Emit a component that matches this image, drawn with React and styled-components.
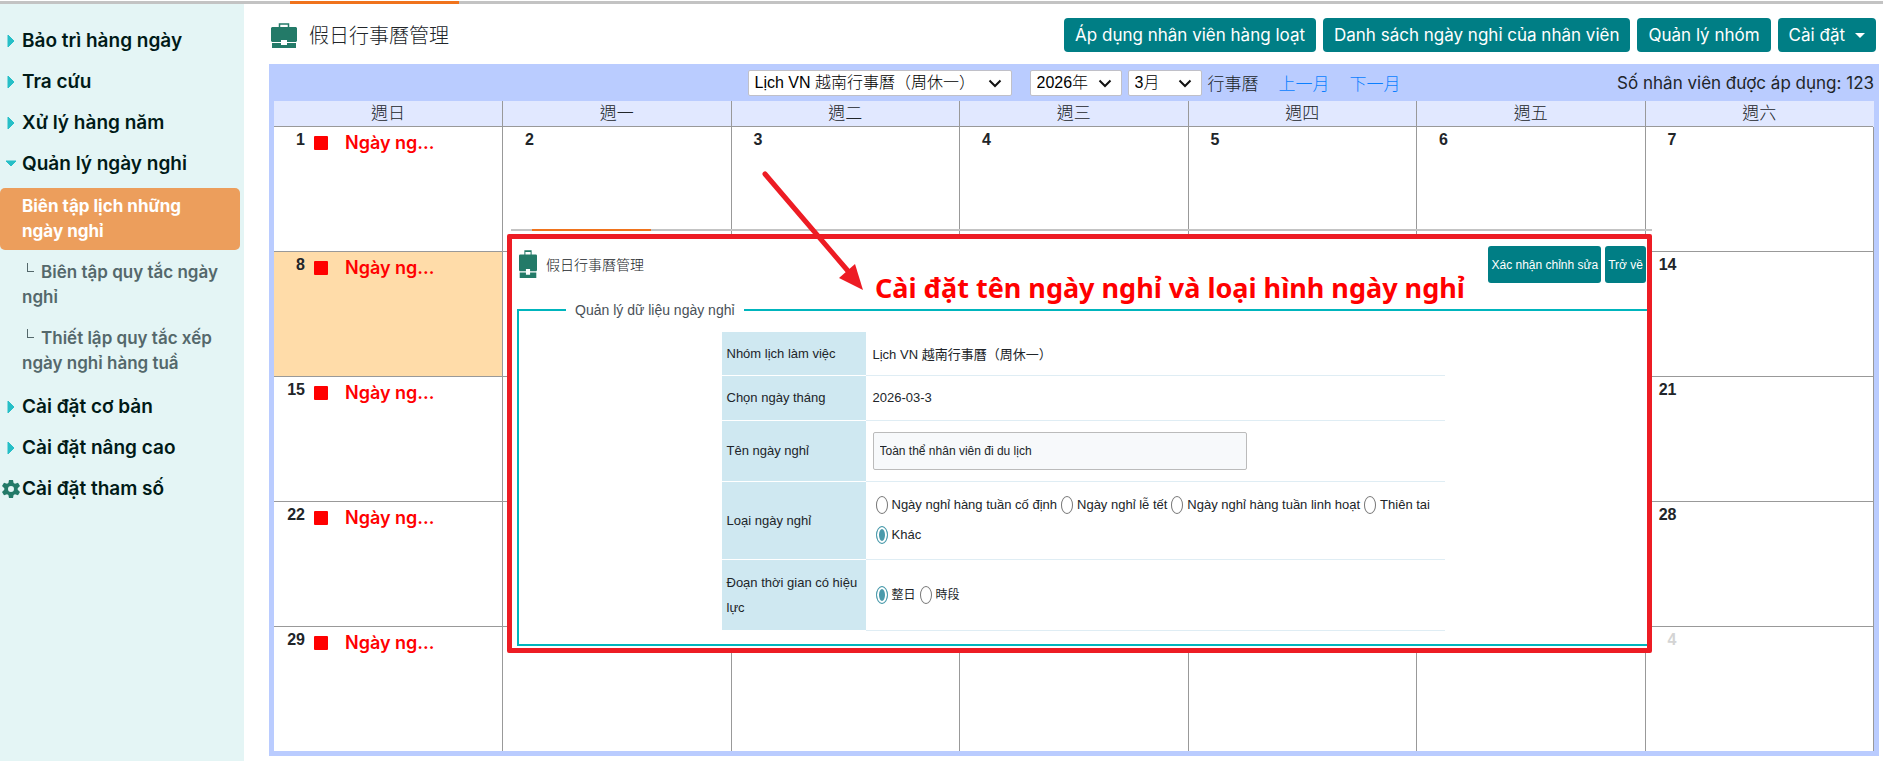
import React from "react";
import styled, { createGlobalStyle, css } from "styled-components";

const GlobalStyle = createGlobalStyle`
  * { box-sizing: border-box; }
  body {
    margin: 0;
    background: #fff;
    color: #212529;
    font-family: Inter, "Noto Sans CJK TC", sans-serif;
    font-size: 16px;
  }
  button, input, select { font: inherit; color: inherit; }
`;

const Page = styled.div`
  display: flex;
  flex-direction: column;
  min-height: 100vh;
  padding-top: 1px;
`;

const Rule = styled.div`
  height: ${(p) => (p.$thin ? 2 : 3)}px;
  padding-left: ${(p) => p.$start}px;
  background: #c3c3c3;
`;

const RuleMark = styled.div`
  width: ${(p) => p.$width}px;
  height: 100%;
  background: #f0731c;
`;

const Columns = styled.div`
  display: flex;
  flex: 1;
`;

const Sidebar = styled.nav`
  flex: 0 0 244px;
  padding: 16px 4px 0 0;
  background: #e4f5f5;
`;

const MenuItem = styled.a`
  display: grid;
  grid-template-columns: 18px 1fr;
  column-gap: 2px;
  align-items: center;
  height: 41px;
  padding-left: 2px;
  color: #001a17;
  font-size: 19px;
  font-weight: 600;
  text-decoration: none;
  svg { justify-self: center; }
`;

const SubItem = styled.a`
  display: block;
  padding: 6px 16px 6px 22px;
  margin-bottom: 4px;
  color: #54686b;
  font-size: 17px;
  font-weight: 600;
  line-height: 25px;
  text-decoration: none;
  ${(p) =>
    p.$active &&
    css`
      margin: 4px 0;
      border-radius: 5px;
      background: #ec9e5c;
      color: #fff;
      font-weight: 700;
    `}
`;

const Branch = styled.span`
  display: inline-block;
  width: 7px;
  height: 9px;
  margin: 0 7px 0 5px;
  border: solid #54686b;
  border-width: 0 0 1px 1px;
  vertical-align: 6px;
`;

const Main = styled.main`
  flex: 1;
  min-width: 0;
  padding: 14px 4px 4px 25px;
`;

const TitleBar = styled.header`
  display: flex;
  align-items: center;
  gap: 7px;
  height: 34px;
  margin: 0 3px 12px 0;
`;

const Title = styled.h1`
  display: flex;
  align-items: center;
  gap: 12px;
  margin: 0 auto 0 2px;
  font: 300 20px/24px "Noto Sans CJK TC", sans-serif;
`;

const ActionButton = styled.button`
  display: flex;
  align-items: center;
  gap: 10px;
  height: 34px;
  padding: 0 11px;
  border: 0;
  border-radius: 4px;
  background: #007e85;
  color: #fff;
  font-size: 17px;
  white-space: nowrap;
`;

const Calendar = styled.section`
  position: relative;
  padding: 0 5px 5px;
  background: #baccff;
`;

const Toolbar = styled.div`
  display: grid;
  grid-template-columns: 1fr auto 1fr;
  align-items: center;
  height: 37px;
`;

const Filters = styled.div`
  grid-column: 2;
  display: flex;
  align-items: center;
  gap: 6px;
  font: 300 17px/24px "Noto Sans CJK TC", sans-serif;
`;

const SelectBox = styled.span`
  position: relative;
  width: ${(p) => p.$width}px;
  margin-right: ${(p) => p.$after || 0}px;
  svg { position: absolute; right: 10px; top: 9px; pointer-events: none; }
`;

const Select = styled.select`
  display: block;
  width: 100%;
  height: 26px;
  padding: 0 6px;
  border: 1px solid #c0c0c8;
  border-radius: 2px;
  background: #fff;
  color: #000;
  appearance: none;
  font-family: "Liberation Sans", "Noto Sans CJK TC", sans-serif;
  font-size: 16px;
  font-weight: 300;
`;

const MonthLink = styled.a`
  margin-left: 14px;
  color: #0a7fff;
  text-decoration: none;
`;

const Applied = styled.div`
  justify-self: end;
  font-size: 17px;
`;

const MonthTable = styled.table`
  width: 100%;
  border-collapse: collapse;
  table-layout: fixed;
  background: #fff;
`;

const WeekDay = styled.th`
  height: 25px;
  padding: 0;
  border-right: 1px solid #999;
  background: #e1e8ff;
  font-size: 17px;
  font-weight: 300;
  line-height: 24px;
  &:last-child { border-right-color: #e1e8ff; }
`;

const DayCell = styled.td`
  height: 125px;
  padding: 4px 0 0 11px;
  border-top: 1px solid #999;
  border-right: 1px solid #999;
  background: ${(p) => (p.$today ? "#ffdca9" : "#fff")};
  vertical-align: top;
`;

const DayLine = styled.div`
  display: flex;
  align-items: flex-start;
`;

const DayNumber = styled.span`
  width: 20px;
  color: ${(p) => (p.$muted ? "#d4d4d4" : "#212529")};
  font: 700 16px/18px "Liberation Sans", Arial, sans-serif;
  text-align: right;
`;

const Holiday = styled.a`
  display: flex;
  align-items: center;
  gap: 17px;
  margin-left: 9px;
  color: #f00;
  font-size: 18px;
  font-weight: 600;
  line-height: 24px;
  text-decoration: none;
  &::before {
    content: "";
    width: 14px;
    height: 14px;
    border-radius: 1px;
    background: #f00;
  }
`;

const Inset = styled.div`
  position: absolute;
  top: 165px;
  left: 238px;
  right: 227px;
`;

const InsetRule = styled.div`
  margin-left: 4px;
`;

const InsetPanel = styled.div`
  margin-top: 3px;
  padding: 7px 0 2px 5px;
  border: 5px solid #ed1c24;
  border-radius: 2px;
  background: #fff;
  font-family: "Liberation Sans", "Noto Sans CJK TC", sans-serif;
  font-size: 13px;
`;

const InsetHead = styled.div`
  display: flex;
  align-items: flex-start;
  gap: 4px;
  padding: 0 1px 0 2px;
`;

const InsetTitle = styled.h2`
  display: flex;
  align-items: center;
  gap: 9px;
  height: 36px;
  margin: 0 auto 0 0;
  font: 300 14px/20px "Noto Sans CJK TC", sans-serif;
`;

const InsetButton = styled.button`
  height: 37px;
  padding: 0 3px;
  border: 0;
  border-radius: 3px;
  background: #007e85;
  color: #fff;
  font-size: 12px;
`;

const Group = styled.fieldset`
  min-width: 0;
  margin: 17px 0 0;
  padding: 12px 0 13px;
  border: 2px solid #00b5bd;
  border-right: 0;
`;

const Legend = styled.legend`
  margin-left: 47px;
  padding: 0 9px;
  color: #495057;
  font-size: 14px;
  line-height: 20px;
`;

const Form = styled.table`
  width: 723px;
  max-width: 100%;
  margin: 0 auto;
  border-collapse: collapse;
`;

const FormLabel = styled.th`
  width: 144px;
  height: ${(p) => p.$height}px;
  padding: 0 5px;
  border-bottom: 1px solid #fff;
  background: #cfe8f1;
  font-weight: 400;
  line-height: 25px;
  text-align: left;
`;

const FormValue = styled.td`
  padding: 0 6px 0 7px;
  border-bottom: 1px solid #dfedf4;
`;

const NameInput = styled.input`
  display: block;
  width: 374px;
  height: 38px;
  padding: 0 6px;
  border: 1px solid #bbb;
  border-radius: 2px;
  background: #f7f9fb;
  font-size: 12px;
`;

const Choices = styled.div`
  display: flex;
  flex-wrap: wrap;
  gap: 6px 4px;
  padding-left: 3px;
`;

const Choice = styled.label`
  display: flex;
  align-items: center;
  gap: 4px;
  font-size: ${(p) => (p.$cjk ? 12 : 13)}px;
  line-height: 24px;
  white-space: nowrap;
`;

const Radio = styled.input`
  width: 12px;
  height: 18px;
  margin: 0;
  border: 1px solid #777;
  border-radius: 50%;
  appearance: none;
  background: #fff;
  &:checked {
    border-color: #4a9aab;
    background: #4a9aab;
    box-shadow: inset 0 0 0 2px #fff;
  }
`;

const Note = styled.p`
  position: absolute;
  top: 206px;
  left: 606px;
  margin: 0;
  color: #f00;
  font: 700 27px/36px "Noto Sans", sans-serif;
  white-space: nowrap;
`;

const Arrow = styled.svg`
  position: absolute;
  top: 106px;
  left: 491px;
`;

const CaretRight = () => (
  <svg width="8" height="14" viewBox="0 0 8 14" aria-hidden="true">
    <path d="M1 1 7 7 1 13Z" fill="#26bfc7" stroke="#26bfc7" strokeLinejoin="round" />
  </svg>
);

const CaretDown = () => (
  <svg width="12" height="8" viewBox="0 0 12 8" aria-hidden="true">
    <path d="M1 1H11L6 6Z" fill="#26bfc7" stroke="#26bfc7" strokeLinejoin="round" />
  </svg>
);

const Gear = () => (
  <svg width="18" height="20" viewBox="0 0 18 20" aria-hidden="true">
    <path
      fill="#237a68"
      fillRule="evenodd"
      d="M7 1h4l.6 3 1.4.8 3-1.1 2 3.4L15.700 9.200v1.600L18 12.900l-2 3.400-3-1.100-1.400.8L11 19H7l-.6-3-1.400-.8-3 1.100-2-3.400 2.300-2.100V9.200L0 7.100l2-3.400 3 1.100L6.400 4ZM9 7a3 3 0 1 0 0 6 3 3 0 0 0 0-6Z"
    />
  </svg>
);

const Briefcase = ({ width, height }) => (
  <svg width={width} height={height} viewBox="0 0 26 25" preserveAspectRatio="none" aria-hidden="true">
    <path d="M8.500 5V1h9v4" fill="none" stroke="#237a68" strokeWidth="1.500" />
    <path fill="#237a68" d="M1 4h24l1 1v13l-1 1h-9v-2h-6v2H1l-1-1V5ZM1 20h9v2h6v-2h9v5H1Z" />
  </svg>
);

const Chevron = () => (
  <svg width="14" height="9" viewBox="0 0 14 9" aria-hidden="true">
    <path d="M1.500 1.500 7 7l5.500-5.500" fill="none" stroke="#111" strokeWidth="2" />
  </svg>
);

const MENU_TOP = ["Bảo trì hàng ngày", "Tra cứu", "Xử lý hàng năm"];
const MENU_BOTTOM = ["Cài đặt cơ bản", "Cài đặt nâng cao"];
const WEEK_DAYS = ["週日", "週一", "週二", "週三", "週四", "週五", "週六"];
const WEEKS = [
  [1, 2, 3, 4, 5, 6, 7],
  [8, null, null, null, null, null, 14],
  [15, null, null, null, null, null, 21],
  [22, null, null, null, null, null, 28],
  [29, null, null, null, null, null, 4],
];
const KINDS = [
  "Ngày nghỉ hàng tuần cố định",
  "Ngày nghỉ lễ tết",
  "Ngày nghỉ hàng tuần linh hoạt",
  "Thiên tai",
  "Khác",
];

function Picker({ label, value, width, after }) {
  return (
    <SelectBox $width={width} $after={after}>
      <Select aria-label={label} defaultValue={value}>
        <option>{value}</option>
      </Select>
      <Chevron />
    </SelectBox>
  );
}

function SideMenu() {
  return (
    <Sidebar>
      {MENU_TOP.map((text) => (
        <MenuItem href="#" key={text}><CaretRight />{text}</MenuItem>
      ))}
      <MenuItem href="#"><CaretDown />Quản lý ngày nghỉ</MenuItem>
      <SubItem href="#" $active>Biên tập lịch những ngày nghỉ</SubItem>
      <SubItem href="#"><Branch />Biên tập quy tắc ngày nghỉ</SubItem>
      <SubItem href="#"><Branch />Thiết lập quy tắc xếp ngày nghỉ hàng tuầ</SubItem>
      {MENU_BOTTOM.map((text) => (
        <MenuItem href="#" key={text}><CaretRight />{text}</MenuItem>
      ))}
      <MenuItem href="#"><Gear />Cài đặt tham số</MenuItem>
    </Sidebar>
  );
}

function HolidayForm() {
  return (
    <Group>
      <Legend>Quản lý dữ liệu ngày nghỉ</Legend>
      <Form>
        <tbody>
          <tr>
            <FormLabel $height={43}>Nhóm lịch làm việc</FormLabel>
            <FormValue>Lịch VN 越南行事曆（周休一）</FormValue>
          </tr>
          <tr>
            <FormLabel $height={45}>Chọn ngày tháng</FormLabel>
            <FormValue>2026-03-3</FormValue>
          </tr>
          <tr>
            <FormLabel $height={61}><label htmlFor="holiday-name">Tên ngày nghỉ</label></FormLabel>
            <FormValue><NameInput id="holiday-name" defaultValue="Toàn thể nhân viên đi du lịch" /></FormValue>
          </tr>
          <tr>
            <FormLabel $height={78}>Loại ngày nghỉ</FormLabel>
            <FormValue>
              <Choices>
                {KINDS.map((kind) => (
                  <Choice key={kind}>
                    <Radio type="radio" name="kind" defaultChecked={kind === "Khác"} />
                    {kind}
                  </Choice>
                ))}
              </Choices>
            </FormValue>
          </tr>
          <tr>
            <FormLabel $height={71}>Đoạn thời gian có hiệu lực</FormLabel>
            <FormValue>
              <Choices>
                <Choice $cjk><Radio type="radio" name="span" defaultChecked />整日</Choice>
                <Choice $cjk><Radio type="radio" name="span" />時段</Choice>
              </Choices>
            </FormValue>
          </tr>
        </tbody>
      </Form>
    </Group>
  );
}

export default function App() {
  return (
    <Page>
      <GlobalStyle />
      <Rule $start={290}><RuleMark $width={169} /></Rule>
      <Columns>
        <SideMenu />
        <Main>
          <TitleBar>
            <Title><Briefcase width={26} height={25} />假日行事曆管理</Title>
            <ActionButton>Áp dụng nhân viên hàng loạt</ActionButton>
            <ActionButton>Danh sách ngày nghỉ của nhân viên</ActionButton>
            <ActionButton>Quản lý nhóm</ActionButton>
            <ActionButton>
              Cài đặt
              <svg width="10" height="5" viewBox="0 0 10 5" aria-hidden="true"><path d="M0 0h10L5 5Z" fill="#fff" /></svg>
            </ActionButton>
          </TitleBar>
          <Calendar>
            <Toolbar>
              <Filters>
                <Picker label="Lịch" value="Lịch VN 越南行事曆（周休一）" width={264} after={12} />
                <Picker label="Năm" value="2026年" width={92} />
                <Picker label="Tháng" value="3月" width={74} />
                <span>行事曆</span>
                <MonthLink href="#">上一月</MonthLink>
                <MonthLink href="#">下一月</MonthLink>
              </Filters>
              <Applied>Số nhân viên được áp dụng: 123</Applied>
            </Toolbar>
            <MonthTable>
              <thead>
                <tr>{WEEK_DAYS.map((d) => <WeekDay key={d} scope="col">{d}</WeekDay>)}</tr>
              </thead>
              <tbody>
                {WEEKS.map((week, w) => (
                  <tr key={w}>
                    {week.map((day, d) => (
                      <DayCell key={d} $today={day === 8}>
                        {day && (
                          <DayLine>
                            <DayNumber $muted={w === 4 && day === 4}>{day}</DayNumber>
                            {d === 0 && <Holiday href="#">Ngày ng…</Holiday>}
                          </DayLine>
                        )}
                      </DayCell>
                    ))}
                  </tr>
                ))}
              </tbody>
            </MonthTable>
            <Inset>
              <InsetRule><Rule $thin $start={21}><RuleMark $width={119} /></Rule></InsetRule>
              <InsetPanel>
                <InsetHead>
                  <InsetTitle><Briefcase width={18} height={28} />假日行事曆管理</InsetTitle>
                  <InsetButton>Xác nhận chỉnh sửa</InsetButton>
                  <InsetButton>Trở về</InsetButton>
                </InsetHead>
                <HolidayForm />
              </InsetPanel>
            </Inset>
            <Arrow width="104" height="122" viewBox="0 0 104 122" aria-hidden="true">
              <path d="M5 4 88 101" stroke="#ed1c24" strokeWidth="5" strokeLinecap="round" />
              <path d="M79 108 95 94 103 120Z" fill="#ed1c24" />
            </Arrow>
            <Note>Cài đặt tên ngày nghỉ và loại hình ngày nghỉ</Note>
          </Calendar>
        </Main>
      </Columns>
    </Page>
  );
}
